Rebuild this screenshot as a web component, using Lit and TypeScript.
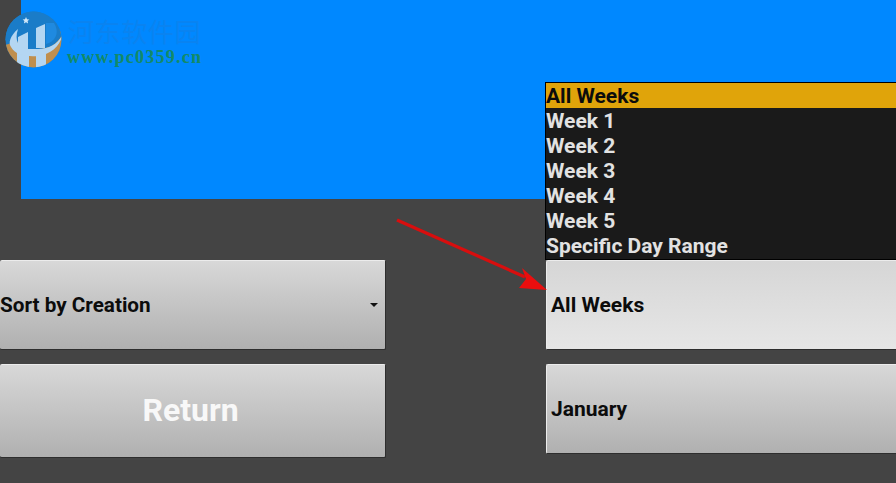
import { LitElement, html, css, svg } from "lit";
import { customElement } from "lit/decorators.js";

const WEEKS = ["All Weeks", "Week 1", "Week 2", "Week 3", "Week 4", "Week 5", "Specific Day Range"];

@customElement("app-root")
export class AppRoot extends LitElement {
  static styles = css`
    :host {
      display: block;
      position: relative;
      width: 896px;
      height: 483px;
      overflow: hidden;
      background: #444444;
      font-family: Roboto, "Liberation Sans", sans-serif;
      font-weight: 700;
    }
    .panel {
      height: 199px;
      margin-left: 21px;
      background: #0088ff;
    }
    .controls {
      display: grid;
      grid-template-columns: 386px 360px;
      column-gap: 160px;
      padding-top: 61px;
    }
    .col {
      display: flex;
      flex-direction: column;
      gap: 14px;
    }
    .btn {
      box-sizing: border-box;
      display: flex;
      align-items: center;
      height: 90px;
      border: 1px solid #2e2e2e;
      border-top-color: #ececec;
      border-left-color: #ececec;
      border-radius: 2px;
      background: linear-gradient(#d8d8d8, #d0d0d0 20%, #b0b0b0);
      color: #0c0c0c;
      font-size: 21px;
      padding-left: 4px;
    }
    .left .btn {
      border-left: none;
      padding-left: 0;
      justify-content: space-between;
      font-size: 20.7px;
    }
    .caret {
      width: 0;
      height: 0;
      margin-right: 7px;
      border-left: 4px solid transparent;
      border-right: 4px solid transparent;
      border-top: 4px solid #111;
    }
    .left .return {
      height: 94px;
      justify-content: center;
      color: #f8f8f8;
      font-size: 32px;
      padding-bottom: 2px;
      padding-right: 4px;
    }
    .light {
      background: linear-gradient(#d6d6d6, #e6e6e6);
    }
    .list {
      position: absolute;
      left: 545px;
      top: 82px;
      width: 360px;
      box-sizing: border-box;
      border: 1px solid #000;
      background: #1a1a1a;
      color: #e2e2e2;
      font-size: 21px;
      padding-bottom: 1px;
    }
    .opt {
      height: 25px;
      line-height: 26px;
      white-space: nowrap;
    }
    .opt.sel {
      background: #e0a40a;
      color: #0c0c0c;
    }
    .arrow {
      position: absolute;
      left: 390px;
      top: 214px;
    }
    .mark {
      position: absolute;
      left: 5px;
      top: 11px;
    }
    .mark-cn {
      position: absolute;
      left: 68px;
      top: 12px;
      font-family: "Noto Sans CJK SC", sans-serif;
      font-size: 26px;
      font-weight: 400;
      letter-spacing: 0.6px;
      color: #0a83f0;
      white-space: nowrap;
    }
    .mark-url {
      position: absolute;
      left: 67px;
      top: 47px;
      font-family: "Liberation Serif", serif;
      font-size: 18px;
      font-weight: 700;
      letter-spacing: 1.25px;
      color: #138a68;
      white-space: nowrap;
    }
  `;

  private logo() {
    return svg`<svg class="mark" width="57" height="57" viewBox="0 0 57 57">
      <defs><clipPath id="disc"><circle cx="28.5" cy="28.5" r="28"/></clipPath></defs>
      <g clip-path="url(#disc)">
        <rect width="57" height="57" fill="#1a7cc8"/>
        <path d="M0 34 L57 18 L57 57 L0 57 Z" fill="#c08f4e"/>
        <path d="M0 0 H57 V24 C52 33 44 38 33 38 L22 38 C14 37 9 30 13 18 L0 30 Z" fill="#1a7cc8"/>
        <path d="M41 12 H49 C54 20 52 28 44 32 L41 33 Z" fill="#1f8ae0"/>
        <path d="M31 17 L40 13 V37 H31 Z M13 26 L23 21 V38 H13 Z M12 42 H24 V57 H12 Z M31 42 H41 V57 H31 Z" fill="#b4d6f2"/>
        <path d="M13 18 C5 25 3 32 6 36 C10 44 22 46 33 45 C45 44 55 35 57 25 C52 33 44 38 33 38 L22 38 C14 37 9 30 13 18 Z" fill="#b4d6f2"/>
        <path d="M21 6 l1 2.2 2.4 .3 -1.8 1.6 .5 2.4 -2.1 -1.2 -2.1 1.2 .5 -2.4 -1.8 -1.6 2.4 -.3 Z" fill="#cfe6f8"/>
      </g>
    </svg>`;
  }

  private arrow() {
    return svg`<svg class="arrow" width="170" height="90" viewBox="0 0 170 90">
      <path d="M7 6 L135 63" stroke="#d80e0e" stroke-width="3.2" fill="none"/>
      <path d="M157 76 L129 74 L136 65 L132 54 Z" fill="#ea0e0e"/>
    </svg>`;
  }

  render() {
    return html`
      <div class="panel"></div>
      <div class="controls">
        <div class="col left">
          <div class="btn"><span>Sort by Creation</span><span class="caret"></span></div>
          <div class="btn return">Return</div>
        </div>
        <div class="col">
          <div class="btn light">All Weeks</div>
          <div class="btn">January</div>
        </div>
      </div>
      <div class="list">
        ${WEEKS.map((w, i) => html`<div class="opt ${i === 0 ? "sel" : ""}">${w}</div>`)}
      </div>
      ${this.arrow()}
      ${this.logo()}
      <div class="mark-cn">河东软件园</div>
      <div class="mark-url">www.pc0359.cn</div>
    `;
  }
}
